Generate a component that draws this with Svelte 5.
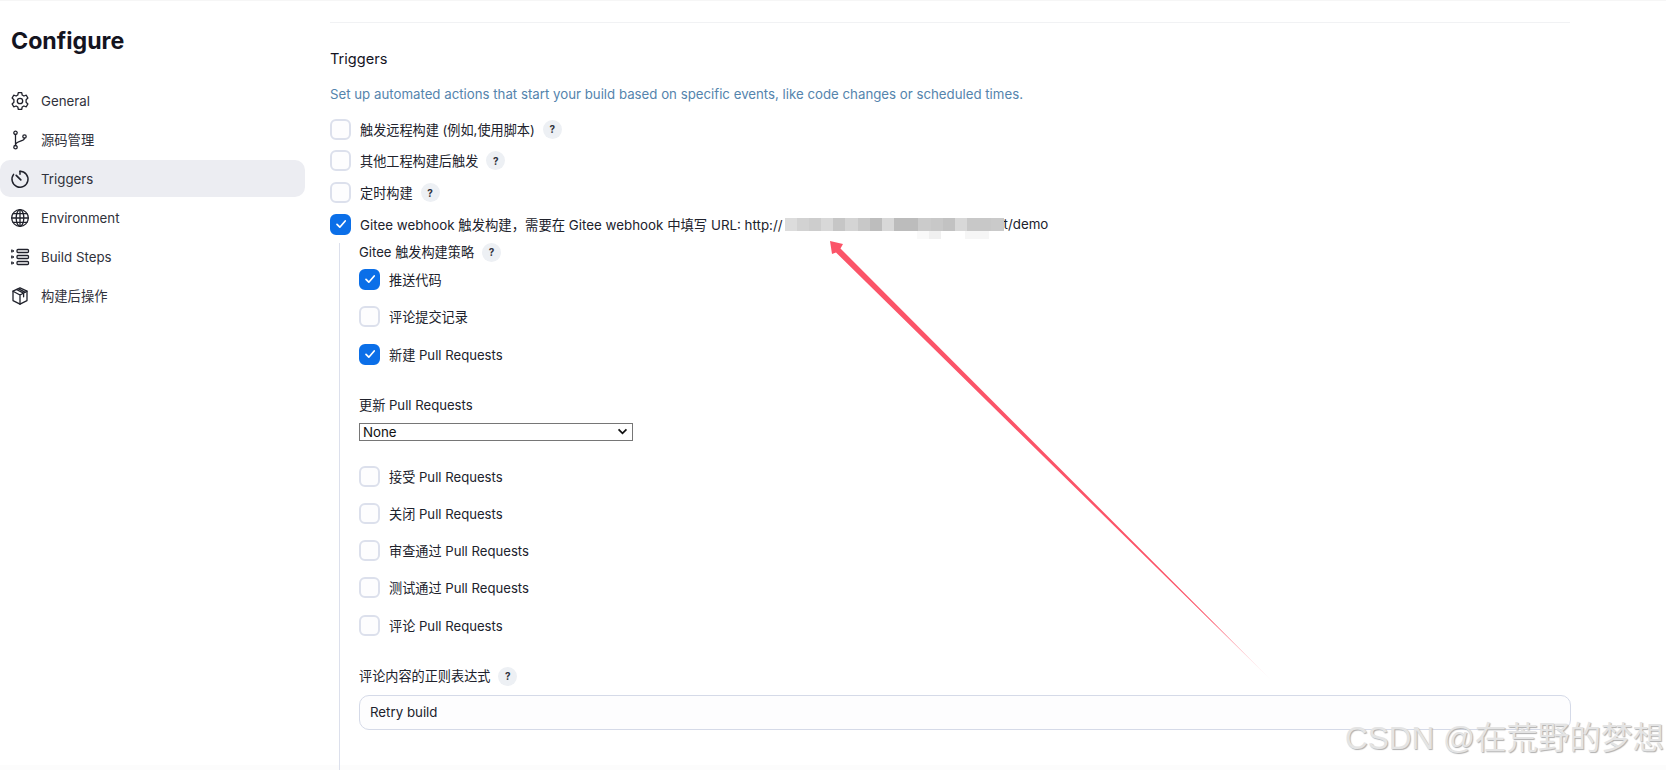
<script>
const navItems = [
  { id: 'general', label: 'General' },
  { id: 'source', label: '源码管理' },
  { id: 'triggers', label: 'Triggers', active: true },
  { id: 'environment', label: 'Environment' },
  { id: 'steps', label: 'Build Steps' },
  { id: 'post', label: '构建后操作' }
];

const triggers = [
  { label: '触发远程构建 (例如,使用脚本)', help: true },
  { label: '其他工程构建后触发', help: true },
  { label: '定时构建', help: true }
];

const strategy = [
  { label: '推送代码', checked: true },
  { label: '评论提交记录', checked: false },
  { label: '新建 Pull Requests', checked: true }
];

const prActions = ['接受 Pull Requests', '关闭 Pull Requests', '审查通过 Pull Requests', '测试通过 Pull Requests', '评论 Pull Requests'];

const blurShades = ['#dcdcdc', '#d2d2d2', '#cdcdcd', '#d8d8d8', '#c6c6c6', '#d4d4d4', '#c8c8c8', '#bdbdbd', '#d8d8d8', '#bcbcbc', '#bcbcbc', '#cbcbcb', '#c8c8c8', '#c2c2c2', '#d8d8d8', '#c8c8c8', '#c8c8c8', '#cacaca'];
</script>

{#snippet check(checked)}
  <span class="box" class:checked>
    {#if checked}
      <svg viewBox="0 0 20 20" width="20" height="20"><path d="M6 10.4l2.8 2.8L14.2 7" fill="none" stroke="#fff" stroke-width="1.7" stroke-linecap="round" stroke-linejoin="round"/></svg>
    {/if}
  </span>
{/snippet}

{#snippet help()}
  <span class="help">?</span>
{/snippet}

{#snippet navIcon(id)}
  <svg viewBox="0 0 20 20" width="20" height="20" fill="none" stroke="#20222c" stroke-width="1.3" stroke-linecap="round" stroke-linejoin="round">
    {#if id === 'general'}
      <circle cx="10" cy="10" r="2.7"/>
      <path d="M8.3 1.6h3.4l.5 2.4 1.7 1 2.4-.8 1.6 2.9-1.8 1.6v2.6l1.8 1.6-1.6 2.9-2.4-.8-1.7 1-.5 2.4H8.3l-.5-2.4-1.7-1-2.4.8-1.6-2.9 1.8-1.6V8.7L2.1 7.1l1.6-2.9 2.4.8 1.7-1z"/>
    {:else if id === 'source'}
      <circle cx="5.5" cy="2.8" r="1.7"/><circle cx="5.5" cy="17.2" r="1.7"/><circle cx="14.5" cy="6.5" r="1.7"/>
      <path d="M5.5 4.5v11M14.5 8.2c0 3.4-9 2.6-9 7"/>
    {:else if id === 'triggers'}
      <path d="M10 2.2a8 8 0 1 1-6.4 3.2" stroke-width="1.5"/>
      <path d="M10 2.2v3" stroke-width="1.5"/>
      <path d="M6.2 6.4l4.6 4.4" stroke-width="1.7"/>
    {:else if id === 'environment'}
      <circle cx="10" cy="10" r="8.3"/>
      <ellipse cx="10" cy="10" rx="3.8" ry="8.3"/>
      <path d="M10 1.7v16.6M1.7 10h16.6M3 5.6h14M3 14.4h14"/>
    {:else if id === 'steps'}
      <rect x="7" y="2.5" width="11.5" height="3" rx="1"/>
      <rect x="7" y="8.5" width="11.5" height="3" rx="1"/>
      <rect x="7" y="14.5" width="11.5" height="3" rx="1"/>
      <path d="M2 3l2 1-2 1zM2 9l2 1-2 1zM2 15l2 1-2 1z" stroke-width="1"/>
    {:else}
      <path d="M10 1.8l7 3.4v9.4l-7 3.6-7-3.6V5.2z"/>
      <path d="M3 5.2L10 9l7-3.8M10 9v9.2M6.4 3.5l7.2 3.7v3.6M8.2 2.7l7.2 3.6"/>
    {/if}
  </svg>
{/snippet}

<div class="page">
  <aside class="sidebar">
    <h1>Configure</h1>
    <nav>
      {#each navItems as item}
        <div class="nav-item" class:active={item.active}>
          {@render navIcon(item.id)}
          <span>{item.label}</span>
        </div>
      {/each}
    </nav>
  </aside>

  <main>
    <hr />
    <h2>Triggers</h2>
    <p class="desc">Set up automated actions that start your build based on specific events, like code changes or scheduled times.</p>

    <div class="trigger-list">
      {#each triggers as t}
        <div class="option">
          {@render check(false)}
          <span>{t.label}</span>
          {@render help()}
        </div>
      {/each}
      <div class="option">
        {@render check(true)}
        <span class="url">Gitee webhook 触发构建，需要在 Gitee webhook 中填写 URL: http://<span class="blur">{#each blurShades as shade}<i style="background:{shade}"></i>{/each}<b class="blur-low"><i class="a"></i><i class="b"></i><i class="c"></i><i class="c"></i></b></span>t/demo</span>
      </div>
    </div>

    <section class="nested">
      <div class="label">Gitee 触发构建策略 {@render help()}</div>
      <div class="strategy">
        {#each strategy as s}
          <div class="option">
            {@render check(s.checked)}
            <span>{s.label}</span>
          </div>
        {/each}
      </div>

      <div class="label update-label">更新 Pull Requests</div>
      <div class="fake-select">
        <span>None</span>
        <svg viewBox="0 0 12 8" width="11" height="7"><path d="M1.5 1.5L6 6l4.5-4.5" fill="none" stroke="#111" stroke-width="2"/></svg>
      </div>

      <div class="pr-actions">
        {#each prActions as label}
          <div class="option">
            {@render check(false)}
            <span>{label}</span>
          </div>
        {/each}
      </div>

      <div class="label regex-label">评论内容的正则表达式 {@render help()}</div>
      <div class="text-input">Retry build</div>
    </section>
  </main>

  <svg class="arrow" viewBox="0 0 1666 770" width="1666" height="770">
    <defs>
      <linearGradient id="fade" gradientUnits="userSpaceOnUse" x1="830" y1="241" x2="1274" y2="683">
        <stop offset="0" stop-color="#fb5468"/>
        <stop offset="0.86" stop-color="#fb5468"/>
        <stop offset="1" stop-color="#fb5468" stop-opacity="0"/>
      </linearGradient>
    </defs>
    <path d="M830 241L843 244 840.5 248.5 1274 683 836 252.5 832 254z" fill="url(#fade)"/>
  </svg>

  <div class="watermark">CSDN @在荒野的梦想</div>
</div>

<style>
  :global(body) {
    background: #fff;
  }

  .page {
    position: relative;
    display: flex;
    height: 770px;
    overflow: hidden;
    box-sizing: border-box;
    border-top: 1px solid #f6f6f6;
    background: linear-gradient(to top, #fcfcfc 5px, #fff 5px);
    font-family: Inter, "Noto Sans CJK SC", sans-serif;
    font-size: 13.15px;
    color: #20222c;
  }

  .sidebar {
    width: 305px;
    flex: none;
  }

  h1 {
    margin: 24px 0 0 11px;
    font-size: 23.2px;
    line-height: 32px;
    font-weight: 700;
    color: #14141f;
  }

  nav {
    margin-top: 25px;
    display: flex;
    flex-direction: column;
    gap: 2px;
  }

  .nav-item {
    display: flex;
    align-items: center;
    gap: 11px;
    height: 37px;
    padding-left: 10px;
    border-radius: 10px;
    color: #30323c;
    font-size: 13.3px;
  }

  .nav-item.active {
    background: #ecedf2;
  }

  main {
    width: 1240px;
    margin-left: 25px;
    flex: none;
  }

  hr {
    margin: 21px 0 0;
    border: 0;
    border-top: 1px solid #f1f2f4;
  }

  h2 {
    margin: 25px 0 0;
    font-size: 14.6px;
    line-height: 22px;
    font-weight: 400;
    color: #14141f;
  }

  .desc {
    margin: 14px 0 0;
    font-size: 13.25px;
    line-height: 20px;
    color: #5484ad;
  }

  .trigger-list {
    margin-top: 14.5px;
    display: flex;
    flex-direction: column;
    gap: 10.8px;
  }

  .option {
    display: flex;
    align-items: center;
    gap: 9px;
    height: 21px;
    white-space: nowrap;
  }

  .box {
    flex: none;
    width: 21px;
    height: 21px;
    box-sizing: border-box;
    border: 2px solid #dce0ec;
    border-radius: 6px;
    background: #fdfdfe;
    display: flex;
    align-items: center;
    justify-content: center;
  }

  .box.checked {
    background: #0b6fe8;
    border-color: #0b6fe8;
  }

  .box svg {
    flex: none;
  }

  .help {
    display: inline-flex;
    align-items: center;
    justify-content: center;
    width: 19px;
    height: 19px;
    border-radius: 50%;
    background: #edf0f4;
    font-size: 10px;
    font-weight: 700;
    color: #30323c;
  }

  .option .help {
    margin-left: -1px;
  }

  .url {
    display: inline-flex;
    align-items: center;
    white-space: pre;
    font-size: 13.35px;
  }

  .blur {
    position: relative;
    display: inline-flex;
    width: 219px;
    height: 13px;
    margin-left: 2px;
  }

  .blur > i {
    flex: 1;
  }

  .blur-low {
    position: absolute;
    top: 13px;
    left: 132px;
    display: flex;
    height: 8px;
  }

  .blur-low i {
    width: 12px;
  }

  .blur-low .a {
    background: #f9f9f9;
  }

  .blur-low .b {
    background: #f0f0f0;
    margin-right: 24px;
  }

  .blur-low .c {
    background: #f6f6f6;
  }

  .nested {
    margin: 8px 0 0 9px;
    padding-left: 19px;
    border-left: 1.5px solid #dce0ec;
    height: 560px;
    box-sizing: border-box;
  }

  .label {
    height: 19px;
    line-height: 19px;
    display: flex;
    align-items: center;
    gap: 8px;
  }

  .strategy {
    margin-top: 7px;
    display: flex;
    flex-direction: column;
    gap: 16.5px;
  }

  .update-label {
    margin-top: 31px;
  }

  .fake-select {
    margin-top: 8px;
    width: 274px;
    height: 18px;
    box-sizing: border-box;
    border: 1px solid #767676;
    background: #fff;
    display: flex;
    align-items: center;
    justify-content: space-between;
    padding: 0 4px 0 3px;
    color: #111;
    font-size: 13.3px;
  }

  .pr-actions {
    margin-top: 25px;
    display: flex;
    flex-direction: column;
    gap: 16.2px;
  }

  .regex-label {
    margin-top: 31px;
  }

  .text-input {
    margin-top: 9px;
    height: 35px;
    width: 1212px;
    box-sizing: border-box;
    border: 1px solid #d5dae8;
    border-radius: 10px;
    background: #fdfdfe;
    padding-left: 10px;
    line-height: 33px;
    font-size: 13.3px;
  }

  .arrow {
    position: absolute;
    left: 0;
    top: -1px;
    pointer-events: none;
  }

  .watermark {
    position: absolute;
    right: 2px;
    top: 718px;
    font-family: "Liberation Sans", "Noto Sans CJK SC", sans-serif;
    font-size: 31.5px;
    line-height: 38px;
    white-space: nowrap;
    color: #e4e4e4;
    text-shadow: 1px 1px 1px #b0b0b0;
  }
</style>
